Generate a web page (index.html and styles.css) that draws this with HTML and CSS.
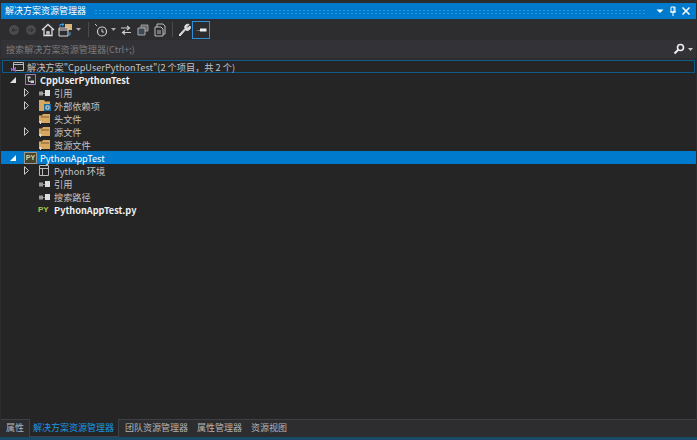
FILE: index.html
```html
<!DOCTYPE html>
<html lang="zh">
<head>
<meta charset="utf-8">
<title>解决方案资源管理器</title>
<link rel="stylesheet" href="styles.css">
</head>
<body>
<div class="window">
  <header class="titlebar">
    <span class="title">解决方案资源管理器</span>
    <span class="grip"></span>
    <svg class="tbtn" width="10" height="10" viewBox="0 0 10 10"><path d="M1.500 3.500h7L5 7z" fill="#fff"/></svg>
    <svg class="tbtn" width="10" height="11" viewBox="0 0 10 11"><path d="M3 1h4v5H3zM2 6h6M5 6v4M6 1v5" fill="none" stroke="#fff"/></svg>
    <svg class="tbtn" width="10" height="10" viewBox="0 0 10 10"><path d="M1.500 1.500l7 7M8.500 1.500l-7 7" stroke="#fff" stroke-width="1.500"/></svg>
  </header>
  <div class="toolbar">
    <svg class="tool" width="14" height="14" viewBox="0 0 14 14"><circle cx="7" cy="7" r="5" fill="#4a4a4c"/><path d="M10 7H5M7 5L5 7l2 2" stroke="#2d2d30" fill="none"/></svg>
    <svg class="tool" width="14" height="14" viewBox="0 0 14 14"><circle cx="7" cy="7" r="5" fill="#4a4a4c"/><path d="M4 7h5M7 5l2 2-2 2" stroke="#2d2d30" fill="none"/></svg>
    <svg class="tool" width="14" height="14" viewBox="0 0 14 14"><path d="M1 7l6-5.500L13 7M3 6v6.500h8V6M6 12.500V9h2v3.500" fill="none" stroke="#ddd" stroke-width="1.300"/></svg>
    <svg class="tool" width="15" height="14" viewBox="0 0 15 14"><path d="M7 1h7v6H7z" fill="#dcb67a"/><path d="M1 5h9v8H1z" fill="#2d2d30" stroke="#ddd"/><path d="M1 7h9" stroke="#ddd"/><path d="M2 4V1.500h4M4 .5L6 1.500 4 3" fill="none" stroke="#3f9de0"/><path d="M12 9v3h-2" fill="none" stroke="#3f9de0"/></svg>
    <svg class="caret" width="5" height="3" viewBox="0 0 5 3"><path d="M0 0h5L2.500 3z" fill="#aaa"/></svg>
    <span class="sep"></span>
    <svg class="tool" width="14" height="14" viewBox="0 0 14 14"><circle cx="8" cy="8.500" r="4.500" fill="none" stroke="#ccc" stroke-width="1.200"/><path d="M8 6v3h2M1 1l2 2" fill="none" stroke="#ccc"/></svg>
    <svg class="caret tight" width="5" height="3" viewBox="0 0 5 3"><path d="M0 0h5L2.500 3z" fill="#aaa"/></svg>
    <svg class="tool" width="14" height="14" viewBox="0 0 14 14"><path d="M2 5h8M8 3l2.500 2L8 7M12 9.500H4M6 7.500L3.500 9.500 6 11.500" fill="none" stroke="#ccc" stroke-width="1.200"/></svg>
    <svg class="tool" width="14" height="14" viewBox="0 0 14 14"><path d="M5 2h7v6H5z" fill="#6a6a6c" stroke="#999"/><path d="M2 5h7v7H2z" fill="#3c4a55" stroke="#aaa"/></svg>
    <svg class="tool" width="14" height="14" viewBox="0 0 14 14"><path d="M4 1h6l2 2v8H4z" fill="none" stroke="#bbb"/><path d="M2 4h6l2 2v7H2z" fill="#2d2d30" stroke="#bbb"/><path d="M4 8h4M4 10h4" stroke="#bbb"/></svg>
    <span class="sep tight"></span>
    <svg class="tool" width="14" height="14" viewBox="0 0 14 14"><path d="M2 12l6-6.500a3 3 0 0 1 4-4L9.500 4l1 1L13 3a3 3 0 0 1-4.500 3.800L3 13z" fill="#ddd" stroke="#ddd"/></svg>
    <span class="pin-active"><svg width="12" height="6" viewBox="0 0 12 6"><path d="M0 3.500h5V1.500h6.500v3H5V4z" fill="#eee"/></svg></span>
  </div>
  <div class="search">
    <span class="search-text">搜索解决方案资源管理器(Ctrl+;)</span>
    <svg width="12" height="12" viewBox="0 0 12 12"><circle cx="7.500" cy="4.500" r="3" fill="none" stroke="#eee" stroke-width="1.600"/><path d="M5.500 6.500L1.500 10.500" stroke="#eee" stroke-width="2"/></svg>
    <svg class="search-caret" width="5" height="3" viewBox="0 0 5 3"><path d="M0 0h5L2.500 3z" fill="#ccc"/></svg>
  </div>
  <main class="tree">
    <div class="row root">
      <svg class="icon" width="14" height="10" viewBox="0 0 14 10"><path d="M2.500 .5h10v8h-10z" fill="none" stroke="#bbb"/><path d="M2.500 2.500h10" stroke="#bbb"/><path d="M0 5.500l2 1.500L5 4.500v5.500L2 8 0 9.500z" fill="#9b5fc0"/></svg>
      <span class="label">解决方案"CppUserPythonTest"(2 个项目，共 2 个)</span>
    </div>
    <div class="row l1">
      <span class="exp"><svg width="6" height="6" viewBox="0 0 6 6"><path d="M6 0v6H0z" fill="#e0e0e0"/></svg></span>
      <svg class="icon" width="14" height="13" viewBox="0 0 14 13"><path d="M1.500 1.500h10v10h-10z" fill="#2a2a2a" stroke="#a07ab8"/><path d="M3.500 3.500h3v2h-3zM6.500 7.500h3.500v2.500H6.500z" fill="#ccc"/><path d="M4.500 5.500v3h2" stroke="#ccc" fill="none"/></svg>
      <span class="label bold">CppUserPythonTest</span>
    </div>
    <div class="row l2">
      <span class="exp"><svg width="5" height="9" viewBox="0 0 5 9"><path d="M.5.700L4.500 4.500.5 8.300z" fill="none" stroke="#ccc"/></svg></span>
      <svg class="icon" width="14" height="8" viewBox="0 0 14 8"><path d="M1 2.500h4v4H1z" fill="#9a9a9a"/><path d="M5 4.500h2" stroke="#888"/><path d="M7 1h5v6H7z" fill="#ddd"/></svg>
      <span class="label">引用</span>
    </div>
    <div class="row l2">
      <span class="exp"><svg width="5" height="9" viewBox="0 0 5 9"><path d="M.5.700L4.500 4.500.5 8.300z" fill="none" stroke="#ccc"/></svg></span>
      <svg class="icon" width="14" height="13" viewBox="0 0 14 13"><path d="M1 1h5l1 1.500h5V12H1z" fill="#d9a860"/><path d="M6 5h7v7H6z" fill="#1a6f9e"/><path d="M8 7h3v3H8z" fill="none" stroke="#ddd"/></svg>
      <span class="label">外部依赖项</span>
    </div>
    <div class="row l2">
      <span class="exp"></span>
      <svg class="icon" width="14" height="13" viewBox="0 0 14 13"><path d="M1 3.500h3l1-1.500h7v9H1z" fill="#d9a860"/><path d="M3 5h8" stroke="#7a5f30"/><path d="M1 10h3M2.500 9v3" stroke="#ddd"/></svg>
      <span class="label">头文件</span>
    </div>
    <div class="row l2">
      <span class="exp"><svg width="5" height="9" viewBox="0 0 5 9"><path d="M.5.700L4.500 4.500.5 8.300z" fill="none" stroke="#ccc"/></svg></span>
      <svg class="icon" width="14" height="13" viewBox="0 0 14 13"><path d="M1 3.500h3l1-1.500h7v9H1z" fill="#d9a860"/><path d="M3 5h8" stroke="#7a5f30"/><path d="M1 10h3M2.500 9v3" stroke="#ddd"/></svg>
      <span class="label">源文件</span>
    </div>
    <div class="row l2">
      <span class="exp"></span>
      <svg class="icon" width="14" height="13" viewBox="0 0 14 13"><path d="M1 3.500h3l1-1.500h7v9H1z" fill="#d9a860"/><path d="M3 5h8" stroke="#7a5f30"/><path d="M1 10h3M2.500 9v3" stroke="#ddd"/></svg>
      <span class="label">资源文件</span>
    </div>
    <div class="row l1 selected">
      <span class="exp"><svg width="6" height="6" viewBox="0 0 6 6"><path d="M6 0v6H0z" fill="#fff"/></svg></span>
      <span class="py-box">PY</span>
      <span class="label white">PythonAppTest</span>
    </div>
    <div class="row l2">
      <span class="exp"><svg width="5" height="9" viewBox="0 0 5 9"><path d="M.5.700L4.500 4.500.5 8.300z" fill="none" stroke="#ccc"/></svg></span>
      <svg class="icon" width="14" height="13" viewBox="0 0 14 13"><path d="M1.500 1.500h9v10h-9zM1.500 4.500h9M4.500 4.500v7" fill="none" stroke="#bbb"/></svg>
      <span class="label">Python 环境</span>
    </div>
    <div class="row l2">
      <span class="exp"></span>
      <svg class="icon" width="14" height="8" viewBox="0 0 14 8"><path d="M1 2.500h4v4H1z" fill="#9a9a9a"/><path d="M5 4.500h2" stroke="#888"/><path d="M7 1h5v6H7z" fill="#ddd"/></svg>
      <span class="label">引用</span>
    </div>
    <div class="row l2">
      <span class="exp"></span>
      <svg class="icon" width="14" height="8" viewBox="0 0 14 8"><path d="M1 2.500h4v4H1z" fill="#9a9a9a"/><path d="M5 4.500h2" stroke="#888"/><path d="M7 1h5v6H7z" fill="#ddd"/></svg>
      <span class="label">搜索路径</span>
    </div>
    <div class="row l2">
      <span class="exp"></span>
      <span class="py-file">PY</span>
      <span class="label bold">PythonAppTest.py</span>
    </div>
  </main>
  <footer class="tabs">
    <span class="tab">属性</span>
    <span class="tab active">解决方案资源管理器</span>
    <span class="tab">团队资源管理器</span>
    <span class="tab">属性管理器</span>
    <span class="tab">资源视图</span>
  </footer>
</div>
</body>
</html>
```
FILE: styles.css
```css
* { box-sizing: border-box; }
html, body { margin: 0; height: 100%; background: #1c1c1e; }
body { font-family: "Noto Sans CJK SC", "Liberation Sans", sans-serif; font-size: 9px; color: #c4c4c4; overflow: hidden; }
.window { width: 697px; height: 440px; display: flex; flex-direction: column; padding: 3px 1px 0; background: #2d2d30; border-bottom: 3px solid #1b4a68; }
.titlebar { height: 16px; flex: none; background: #007acc; display: flex; align-items: center; padding: 0 5px 0 4px; gap: 3px; color: #fff; }
.title { font-size: 9px; line-height: 16px; }
.grip { flex: 1; height: 5px; margin: 0 5px; background-image: radial-gradient(#2a92da 0.6px, transparent 0.7px); background-size: 4px 3px; }
.tbtn { flex: none; }
.toolbar { height: 21px; flex: none; display: flex; align-items: center; padding-left: 6px; gap: 3px; background: #2d2d30; }
.tool { flex: none; }
.caret { flex: none; margin-right: 1px; }
.caret.tight { margin-right: 0; }
.sep { width: 1px; height: 15px; background: #4a4a4d; margin: 0 2px 0 3px; }
.sep.tight { margin: 0 1px 0 2px; }
.pin-active { width: 18px; height: 18px; margin-left: -2px; border: 1px solid #2f8fd8; display: flex; align-items: center; justify-content: center; }
.search { height: 18px; flex: none; display: flex; align-items: center; background: #333337; padding: 0 3px 0 5px; gap: 2px; margin-bottom: 2px; }
.search-text { flex: 1; color: #7c7c7c; font-size: 9.1px; line-height: 18px; }
.search-caret { margin-left: 1px; }
.tree { flex: 1; min-height: 0; background: #252526; font-size: 9.2px; overflow: hidden; display: flex; flex-direction: column; }
.row { height: 13px; display: flex; align-items: center; flex: none; }
.row.root { margin: 0 1px; padding-left: 8px; border: 1px solid #0e5a8a; }
.row.l1 { padding-left: 8px; }
.row.l2 { padding-left: 21px; }
.exp { width: 8px; display: flex; justify-content: center; flex: none; }
.row.l1 .exp { margin-right: 7px; }
.row.l2 .exp { margin-right: 8px; }
.icon { flex: none; margin-right: 2px; }
.label { white-space: nowrap; line-height: 12px; }
.bold { font-weight: 700; color: #eee; }
.white { color: #fff; }
.selected { background: #007acc; }
.py-box { width: 13px; height: 12px; margin-right: 3px; border: 1px solid #999; background: #44442f; color: #d8d89a; font: 700 7px/10px "Liberation Sans", sans-serif; text-align: center; flex: none; }
.py-file { width: 14px; margin-right: 2px; color: #a7c44a; font: 700 8px/13px "Liberation Sans", sans-serif; flex: none; }
.tabs { height: 18px; flex: none; display: flex; background: #2d2d30; border-top: 1px solid #3f3f46; padding-left: 0.5px; font-size: 9px; color: #b4b4b4; }
.tab { padding: 0 4.5px; line-height: 16px; white-space: nowrap; }
.tab.active { color: #1c97ea; background: #252526; border: 1px solid #3f3f46; border-top: 0; margin-top: -1px; height: 18px; padding: 1px 4px 0 3.5px; margin-right: 1.5px; }
```
